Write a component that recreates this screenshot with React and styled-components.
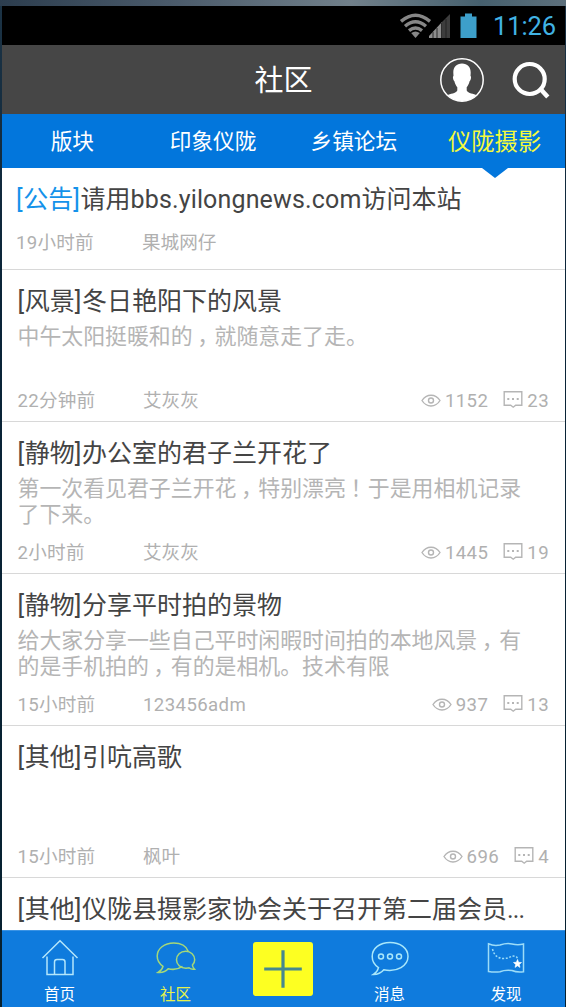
import React from "react";
import styled, { createGlobalStyle } from "styled-components";

const Global = createGlobalStyle`
  *{box-sizing:border-box}
  html,body,#root{height:100%}
  body{margin:0;overflow:hidden;font-family:Roboto,"Noto Sans CJK SC",sans-serif;}
`;
const Desktop = styled.div`
  height:1007px;width:566px;padding:6px 1px 0 2px;
  background:linear-gradient(90deg,#2c3d4e 0%,#4a5a6a 30%,#71808a 62%,#46606e 85%,#5d707c 100%) top/100% 6px no-repeat,
    linear-gradient(#1c3345,#0a2438 30%,#06202f 100%);
`;
const Phone = styled.div`height:1001px;display:flex;flex-direction:column;background:#fff;overflow:hidden;`;
const StatusBar = styled.div`
  height:39px;flex:none;background:#000;display:flex;align-items:center;justify-content:flex-end;padding-right:9px;
  svg{display:block}
`;
const StatusIcons = styled.div`
  display:flex;align-items:center;
  svg:first-child{margin-right:-3px}
  svg:last-child{margin-left:9px}
`;
const Clock = styled.span`color:#41b3e4;font-size:25.5px;line-height:39px;margin-left:16px;padding-top:2px;letter-spacing:-0.1px;`;
const Header = styled.header`
  height:69px;flex:none;background:#464646;display:grid;grid-template-columns:1fr auto 1fr;align-items:center;
`;
const HeaderTitle = styled.h1`margin:0;padding-top:3px;color:#fff;font-size:29px;font-weight:400;line-height:66px;grid-column:2;`;
const Actions = styled.div`display:flex;justify-content:flex-end;align-items:center;gap:28px;padding-right:15px;svg{display:block}`;
const Tabs = styled.nav`height:54px;flex:none;background:#0276dc;display:grid;grid-template-columns:repeat(4,1fr);`;
const Tab = styled.div`
  position:relative;text-align:center;line-height:56px;white-space:nowrap;
  color:${p => p.$active ? "#f4fa3c" : "#fff"};font-size:${p => p.$active ? 23.3 : 21.7}px;
`;
const Pointer = styled.i`
  position:absolute;left:50%;top:54px;margin-left:-13px;
  border:13px solid transparent;border-top:10px solid #0276dc;border-bottom:0;
`;
const List = styled.main`flex:1;min-height:0;overflow:hidden;`;
const Row = styled.article`
  height:${p => p.$short ? 102 : 152}px;border-bottom:1px solid #d8d8d8;
  padding:17px 16px 0 ${p => p.$short ? 14 : 15.5}px;
`;
const Title = styled.h2`
  margin:0;font-size:25px;font-weight:400;line-height:30px;color:#444;white-space:nowrap;
`;
const Notice = styled.span`color:#1492ea;`;
const Latin = styled.span`letter-spacing:${p => p.$gap}px;`;
const Excerpt = styled.p`
  margin:7px 0 0;height:52px;font-size:21.9px;line-height:26px;color:#b5b5b5;white-space:pre;
`;
const Comma = styled.span`padding-left:4.5px;margin-right:-4.5px;`;
const Meta = styled.div`
  display:flex;align-items:center;height:26px;line-height:26px;margin-top:${p => p.$short ? 15 : 12}px;
  font-size:18.6px;color:#b0b0b0;white-space:nowrap;letter-spacing:.1px;
`;
const Time = styled.span`width:${p => p.$short ? 126 : 125.5}px;letter-spacing:.25px;`;
const Author = styled.span`flex:1;letter-spacing:${p => p.$latin ? 0.4 : 0}px;`;
const Stat = styled.span`
  display:flex;align-items:center;gap:4px;margin-left:15px;letter-spacing:.4px;
  svg{display:block;margin-bottom:2px}
`;
const BottomBar = styled.footer`
  height:77px;flex:none;background:#0f7bdd;border-top:1px solid #3a93e4;display:grid;
  grid-template-columns:115px 117px 98px 115px 118px;
`;
const NavItem = styled.div`
  display:flex;flex-direction:column;align-items:center;padding-top:7px;color:${p => p.$active ? "#e6f24c" : "#fff"};
  font-size:15.5px;line-height:22px;svg{display:block;margin-bottom:8px}
`;
const AddButton = styled.div`
  width:60px;height:54px;margin:11px auto 0;border-radius:3px;background:#fdff22;display:grid;place-items:center;
`;

const Wifi = () => (
  <svg width="33" height="26" viewBox="0 0 33 26" fill="none" stroke="#868686" strokeWidth="3.4">
    <path d="M2 8.4Q16.5-3.7 31 8.4M6 13.2Q16.5 4.4 27 13.2M10 17.6Q16.5 12.4 23 17.6" />
    <path d="M12.2 20Q16.5 16.8 20.8 20L16.5 25Z" fill="#868686" stroke="none" />
  </svg>
);
const Signal = () => (
  <svg width="22" height="26" viewBox="0 0 22 26">
    <path d="M0 25V23L13 9V25Z" fill="#8d8d8d" /><path d="M13 25V9L21 1V25Z" fill="#3d3d3d" />
    <path d="M4 25V19M8 25V15M12.5 25V10M17 25V6" stroke="#222" strokeWidth=".9" />
  </svg>
);
const Battery = () => (
  <svg width="17" height="26" viewBox="0 0 17 26"><path d="M5 .5H12V3.5H16.5V25H.5V3.5H5Z" fill="#3d9fca" /></svg>
);
const Avatar = () => (
  <svg width="44" height="44" viewBox="0 0 44 44">
    <circle cx="22" cy="22" r="21.2" fill="none" stroke="#fff" strokeWidth="1.5" />
    <path d="M22 5.5C27.5 5.5 30.7 9 30.7 14.5L30.5 18C31.6 18.2 31 22 29.6 23.2C29 26 27.7 28 26.7 29.2V32.5C28 35.5 34 35.8 36.7 37.1A21 21 0 0 1 7.3 37.1C10 35.8 16 35.5 17.3 32.5V29.2C16.3 28 15 26 14.4 23.2C13 22 12.4 18.2 13.5 18L13.3 14.5C13.3 9 16.5 5.5 22 5.5Z" fill="#fff" />
  </svg>
);
const Search = () => (
  <svg width="38" height="38" viewBox="0 0 38 38" fill="none" stroke="#fff">
    <circle cx="17.7" cy="18" r="15" strokeWidth="4.2" /><path d="M28 27.5L35.8 36" strokeWidth="4.5" />
  </svg>
);
const Eye = () => (
  <svg width="20" height="15" viewBox="0 0 20 15" fill="none" stroke="#b5b5b5" strokeWidth="1.4">
    <path d="M1 7.5C5.5.4 14.5.4 19 7.5C14.5 14.8 5.5 14.8 1 7.5Z" /><circle cx="10" cy="7.5" r="2.5" />
  </svg>
);
const Comment = () => (
  <svg width="20" height="20" viewBox="0 0 20 20" fill="none" stroke="#b5b5b5" strokeWidth="1.4">
    <path d="M1.2 1.8H18.8V15.2H12.7L10.2 17.2L7.7 15.2H1.2Z" />
    <path d="M4.3 9H6.3M9 9H11M13.7 9H15.7" strokeWidth="2" />
  </svg>
);
const House = () => (
  <svg width="38" height="38" viewBox="0 0 38 38" fill="none" stroke="#b4e6fb" strokeWidth="1.5">
    <path d="M1.5 20L19 2.8L36.5 20M6 18.5V36.5H32V18.5M13.5 36.5V24Q13.5 21.5 16 21.5H21.5Q24 21.5 24 24V36.5" />
  </svg>
);
const Chats = () => (
  <svg width="40" height="38" viewBox="0 0 40 38" fill="none" stroke="#a5d879" strokeWidth="1.5">
    <path d="M32.3 13.4C30.5 8.2 24.8 5 17.8 5C8.4 5 1.2 10.6 1.2 18C1.2 22.2 3.3 25.8 7 28.3C6.3 31.3 4.5 33 2 34.4C6.3 34.8 9.8 33.5 12.2 30.8C17.5 32 22.6 31.2 26.5 28.4" />
    <path d="M38.7 21.8C38.7 17 34.8 13.3 29.7 13.3C24.4 13.3 20.5 17.2 20.5 21.7C20.5 26.6 24.5 30.2 30 30.2L33 29.8C34.7 31.3 36.5 31.6 38.6 31.2C37.3 30 36.5 28.7 36.4 27C37.9 25.6 38.7 23.8 38.7 21.8Z" />
  </svg>
);
const Message = () => (
  <svg width="38" height="38" viewBox="0 0 38 38" fill="none" stroke="#a9e7fa" strokeWidth="1.5">
    <path d="M19 4.5C8.7 4.5 1.2 10.4 1.2 18.5C1.2 23 3.5 27 7.5 29.6C6.7 32.7 4.9 35 2.4 36.5C7 36.5 10.3 34.8 12.8 31.8C26.3 34.5 37 27.5 37 18.5C37 10.3 29.2 4.5 19 4.5Z" />
    <circle cx="10" cy="18.5" r="2.5" /><circle cx="19" cy="18.5" r="2.5" /><circle cx="28" cy="18.5" r="2.5" />
  </svg>
);
const MapIcon = () => (
  <svg width="38" height="38" viewBox="0 0 38 38" fill="none" stroke="#9cdcf8" strokeWidth="1.5">
    <path d="M1.5 5.8Q7 8.3 13 7Q20 4.7 25 6Q31 7.5 36.5 6V33.8Q30 34.7 25 32.5Q18 31.6 13 33.8Q7 34.5 1.5 33.5Z" />
    <path d="M5.5 11C7 17.5 11 20.5 17 20.5C22 20.5 24 17.5 28 18.2C30 18.7 30.4 20 30.7 22" strokeDasharray="2 1.6" />
    <path d="M30.5 21.5L31.6 24.3L34.5 24.5L32.3 26.5L33 29.4L30.5 27.8L28 29.4L28.7 26.5L26.5 24.5L29.4 24.3Z" fill="#fff" stroke="#fff" strokeWidth=".6" />
  </svg>
);
const Plus = () => (
  <svg width="40" height="40" viewBox="0 0 40 40"><path d="M20 1.2V38.8M1.2 20H38.8" stroke="#46888f" strokeWidth="3.2" /></svg>
);

const posts = [
  { title: "[风景]冬日艳阳下的风景", text: "中午太阳挺暖和的，就随意走了走。", time: "22分钟前", author: "艾灰灰", views: 1152, replies: 23 },
  { title: "[静物]办公室的君子兰开花了", text: "第一次看见君子兰开花，特别漂亮！于是用相机记录\n了下来。", time: "2小时前", author: "艾灰灰", views: 1445, replies: 19 },
  { title: "[静物]分享平时拍的景物", text: "给大家分享一些自己平时闲暇时间拍的本地风景，有\n的是手机拍的，有的是相机。技术有限", time: "15小时前", author: "123456adm", views: 937, replies: 13 },
  { title: "[其他]引吭高歌", text: "", time: "15小时前", author: "枫叶", views: 696, replies: 4 },
  { title: "[其他]仪陇县摄影家协会关于召开第二届会员..." },
];
const centred = text => text.split(/([，！])/).map((s, i) => (i % 2 ? <Comma key={i}>{s}</Comma> : s));
const bracketed = text =>
  text.split(/([[\]]|\.{3})/).map((s, i) => (i % 2 ? <Latin key={i} $gap={s === "..." ? -0.8 : 0.6}>{s}</Latin> : s));

const Post = ({ title, text, time, author, views, replies }) => (
  <Row>
    <Title>{bracketed(title)}</Title>
    {time && (
      <>
        <Excerpt>{centred(text)}</Excerpt>
        <Meta>
          <Time>{time}</Time>
          <Author $latin={/^\d/.test(author)}>{author}</Author>
          <Stat><Eye />{views}</Stat>
          <Stat><Comment />{replies}</Stat>
        </Meta>
      </>
    )}
  </Row>
);

export default function App() {
  return (
    <Desktop>
      <Global />
      <Phone>
        <StatusBar><StatusIcons><Wifi /><Signal /><Battery /></StatusIcons><Clock>11:26</Clock></StatusBar>
        <Header><HeaderTitle>社区</HeaderTitle><Actions><Avatar /><Search /></Actions></Header>
        <Tabs>
          <Tab>版块</Tab><Tab>印象仪陇</Tab><Tab>乡镇论坛</Tab><Tab $active>仪陇摄影<Pointer /></Tab>
        </Tabs>
        <List>
          <Row $short>
            <Title><Notice>{bracketed("[公告]")}</Notice>请用<Latin $gap={0.15}>bbs.yilongnews.com</Latin>访问本站</Title>
            <Meta $short><Time $short>19小时前</Time><Author>果城网仔</Author></Meta>
          </Row>
          {posts.map(p => <Post key={p.title} {...p} />)}
        </List>
        <BottomBar>
          <NavItem><House />首页</NavItem>
          <NavItem $active><Chats />社区</NavItem>
          <AddButton><Plus /></AddButton>
          <NavItem><Message />消息</NavItem>
          <NavItem><MapIcon />发现</NavItem>
        </BottomBar>
      </Phone>
    </Desktop>
  );
}
